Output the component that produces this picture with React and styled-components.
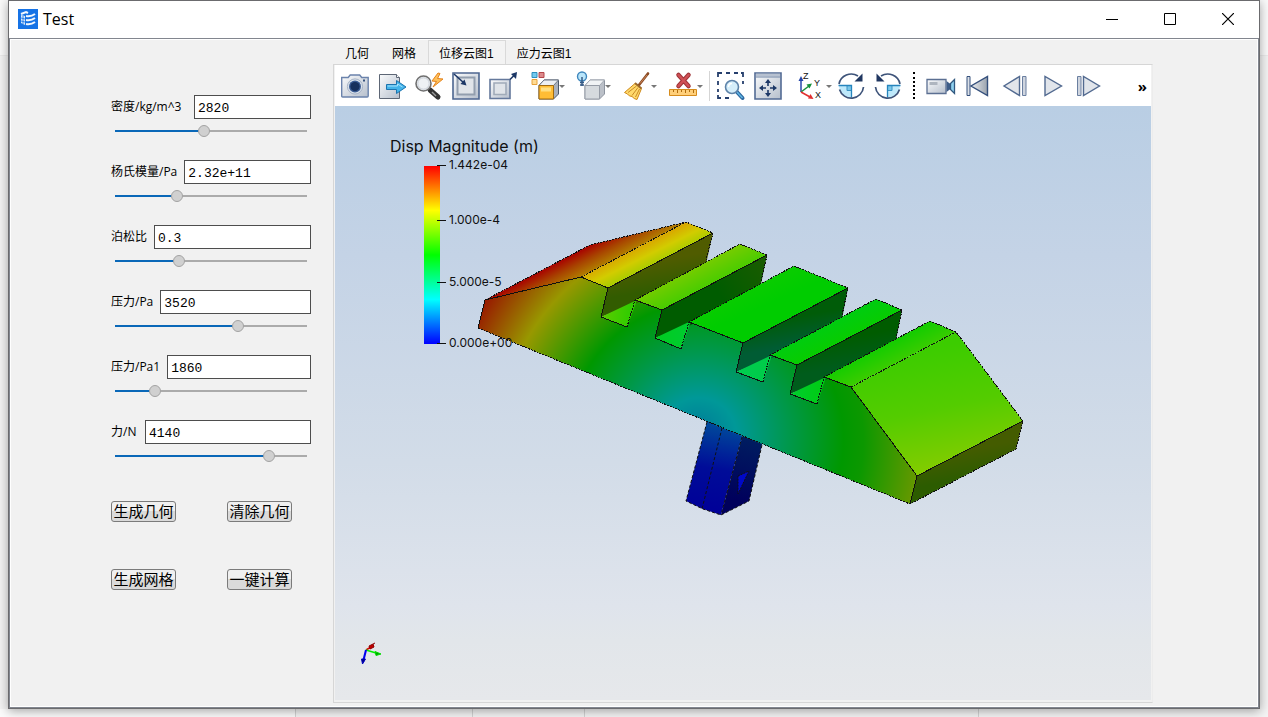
import React, { useState } from "react";
import styled, { createGlobalStyle } from "styled-components";

const UI_FONT = '"Open Sans", "Noto Sans CJK SC", sans-serif';
const SONG_FONT = '"Liberation Sans", "Noto Sans CJK SC", sans-serif';

const GlobalStyle = createGlobalStyle`
  * { box-sizing: border-box; }
  body { margin: 0; background: #f0f0f0; }
  button, input { margin: 0; }
`;

const Desktop = styled.div`
  min-height: 100vh;
  display: grid;
  grid-template-rows: 1fr 8px;
  background: linear-gradient(#fafafa 0 55px, #ebebeb 55px 56px, #f3f3f3 56px);
`;

const Window = styled.main`
  margin: 0 8px;
  display: flex;
  flex-direction: column;
  min-width: 0;
  background: #f1f1f1;
  border: 1px solid #6b6b6e;
  box-shadow: 0 2px 10px rgba(0, 0, 0, 0.35);
  z-index: 1;
`;

const Taskbar = styled.div`
  display: grid;
  grid-template-columns: 296px 177px 112px 394px 1fr;
  background: #f4f4f4;
`;

const TaskCell = styled.span`
  border-right: 1px solid #d4d4d4;
  background: ${(p) => (p.$light ? "#fbfbfb" : "transparent")};
`;

const TitleBar = styled.header`
  height: 37px;
  display: flex;
  align-items: center;
  background: #fff;
  padding: 0 2px 2px 9px;
`;

const Title = styled.h1`
  flex: 1;
  margin: 0 0 0 5px;
  font: 400 16px/20px ${UI_FONT};
  color: #000;
`;

const WindowButton = styled.button`
  width: 58px;
  height: 34px;
  padding: 0;
  border: 0;
  background: none;
  display: grid;
  place-items: center;
`;

const Client = styled.div`
  flex: 1;
  display: grid;
  grid-template-columns: 322px minmax(0, 1fr) 104px;
  border: 1px solid #82868f;
  box-shadow: inset 0 0 0 1px #fff;
  padding: 1px;
`;

const SidePanel = styled.form`
  padding: 55px 22px 0 100px;
`;

const Field = styled.div`
  height: 65px;
`;

const FieldRow = styled.div`
  display: flex;
  align-items: center;
  gap: 7px;
`;

const FieldLabel = styled.label`
  min-width: ${(p) => p.$minWidth || 0}px;
  font: 12px/24px ${UI_FONT};
  color: #000;
  white-space: nowrap;
`;

const TextBox = styled.input`
  flex: 1;
  min-width: 0;
  height: 24px;
  padding: 2px 3px 0;
  border: 1px solid #4d4d4d;
  border-radius: 0;
  background: #fff;
  color: #000;
  font: 13px/20px "Liberation Mono", monospace;
`;

const Slider = styled.input`
  appearance: none;
  display: block;
  width: 192px;
  height: 12px;
  margin: 6px 4px 0;
  background: linear-gradient(#0a68b8, #0a68b8) 0 5px / var(--fill) 2px no-repeat,
    linear-gradient(#ababab, #ababab) 0 5px / 100% 2px no-repeat;
  &::-webkit-slider-thumb {
    appearance: none;
    width: 12px;
    height: 12px;
    border: 1px solid #a3a3a3;
    border-radius: 50%;
    background: #d0d0d0;
  }
`;

const Actions = styled.div`
  display: grid;
  grid-template-columns: 65px 65px;
  column-gap: 51px;
  row-gap: 47px;
  margin-top: 16px;
`;

const ActionButton = styled.button`
  height: 21px;
  padding: 0;
  border: 1px solid #7b7b7b;
  border-radius: 3px;
  background: linear-gradient(#f0f0f0 0 50%, #dadada 50% 100%);
  color: #000;
  font: 15px/18px ${SONG_FONT};
  white-space: nowrap;
`;

const Viewer = styled.section`
  display: flex;
  flex-direction: column;
  padding-bottom: 3px;
`;

const Tabs = styled.nav`
  display: flex;
  height: 24px;
  padding-left: 1px;
`;

const Tab = styled.button`
  height: 24px;
  padding: 2px 11px 0 10px;
  border: 1px solid transparent;
  border-bottom: 0;
  background: none;
  color: #000;
  font: 12px/20px ${SONG_FONT};
  ${(p) => p.$active && "border-color: #d9d9d9; background: #f3f3f3;"}
`;

const Frame = styled.div`
  flex: 1;
  display: flex;
  flex-direction: column;
  border: 1px solid #d6d6d6;
  border-right-color: #ececec;
  padding: 0 1px 2px;
`;

const Toolbar = styled.div`
  height: 41px;
  display: flex;
  align-items: center;
  background: #fff;
  padding: 0 4px 0 6px;
  overflow: hidden;
`;

const ToolGroup = styled.div`
  display: flex;
  flex: none;
  gap: ${(p) => p.$gap || 9}px;
  margin-left: ${(p) => p.$before || 0}px;
`;

const ToolButton = styled.button`
  display: flex;
  align-items: center;
  flex: none;
  padding: 0;
  border: 0;
  background: none;
  svg { display: block; overflow: visible; }
`;

const Divider = styled.span`
  flex: none;
  width: 1px;
  height: 30px;
  margin-left: 6px;
  background: #d5d5d5;
`;

const DottedDivider = styled.span`
  flex: none;
  height: 27px;
  margin-left: 11px;
  border-left: 2px dotted #000;
`;

const MoreButton = styled.button`
  margin-left: auto;
  padding: 0;
  border: 0;
  background: none;
  font: 700 15px/20px ${UI_FONT};
  color: #000;
`;

const Viewport = styled.div`
  flex: 1;
  background: linear-gradient(#b9cee4, #c4d3e6 25%, #d2dce8 60%, #dfe4ec 84%, #e2e6ea 90%, #e6e8eb);
  svg { display: block; width: 100%; height: auto; }
`;

const NAVY = "#35507c";

const Arrow = () => (
  <svg width="6" height="28" viewBox="0 0 6 28"><path d="M0 13h6l-3 3z" fill="#777" /></svg>
);

function Metal({ id }) {
  return (
    <defs>
      <linearGradient id={id} x1="0" y1="0" x2="1" y2="1">
        <stop offset="0" stopColor="#fafbfc" /><stop offset="1" stopColor="#b6bfcc" />
      </linearGradient>
    </defs>
  );
}

const icons = {
  camera: (
    <>
      <Metal id="m-cam" />
      <path d="M.7 5.500h6.500l2-2.500h9.500l2 2.500h6.500v18.500q0 1-1 1h-24.500q-1 0-1-1z" fill="url(#m-cam)" stroke="#6b83ac" strokeWidth="1.4" />
      <circle cx="14" cy="14.500" r="7.600" fill="#dbe3ec" stroke="#a5b2c6" />
      <circle cx="14" cy="14.500" r="6" fill="#3a5b93" />
      <circle cx="14" cy="14.500" r="4.600" fill="#17305c" />
      <path d="M22 8.500h2" stroke={NAVY} strokeWidth="2" />
    </>
  ),
  export: (
    <>
      <Metal id="m-exp" />
      <path d="M1.500 2.500h17l3 3v21h-20z" fill="url(#m-exp)" stroke="#5d6675" />
      <path d="M18.500 2.500v3h3" fill="#fff" stroke="#5d6675" />
      <path d="M8.500 12.500h10v-4l9.500 6.500-9.500 6.500v-4h-10z" fill="#43b4ea" stroke="#1b73ae" />
      <path d="M9.500 14h10v-2l5 3" fill="none" stroke="#a8e2fb" />
    </>
  ),
  probe: (
    <>
      <path d="M15 18l8 7" stroke="#333" strokeWidth="5" strokeLinecap="round" />
      <path d="M17 20l4 4" stroke="#999" strokeWidth="1.500" />
      <circle cx="8.500" cy="11.500" r="7.500" fill="#eef1f4" stroke="#707070" strokeWidth="1.600" />
      <circle cx="8.500" cy="11.500" r="5.700" fill="none" stroke="#c8ced6" />
      <path d="M23 1l-6 8 4.500.500-3.500 5.500 10-8-5.500-.500 2.500-5z" fill="#ffc05a" stroke="#e4831c" />
    </>
  ),
  zoomIn: (
    <>
      <Metal id="m-in" />
      <path d="M1 1h26v26H1z" fill="url(#m-in)" stroke="#4d6690" strokeWidth="1.600" />
      <path d="M5.500 5.500h17v17h-17z" fill="#e0e4e9" stroke="#929eae" strokeWidth="2" />
      <path d="M2 2l10 9" stroke="#1c3766" strokeWidth="1.600" />
      <path d="M14.500 13.500l-2-6-4 4.500z" fill="#1c3766" />
    </>
  ),
  zoomOut: (
    <>
      <Metal id="m-out" />
      <path d="M1 7.500h20v19H1z" fill="url(#m-out)" stroke="#65799c" strokeWidth="1.600" />
      <path d="M5 11h12v11.500H5z" fill="#e0e4e9" stroke="#a0abb9" strokeWidth="1.600" />
      <path d="M21 7.500l6-6" stroke="#1c3766" strokeWidth="1.600" />
      <path d="M28 0l-1 7-5-5z" fill="#1c3766" />
    </>
  ),
  colorCube: (
    <>
      <path d="M1 .500h5v5H1z" fill="#72c9ef" stroke="#2d8fbe" />
      <path d="M8 .500h5v5H8z" fill="#dd8a8c" stroke="#b4474b" />
      <path d="M1 7.500h5v5H1z" fill="#ffdb94" stroke="#e6a23c" />
      <path d="M8 13.500L13 8h14.500v14l-5 5H8z" fill="#a9b1bd" stroke="#4c586a" />
      <path d="M8 13.500L13 8h14.500l-5 5.500z" fill="#eceff3" stroke="#6c7685" />
      <path d="M8 13.500h14.500V27H8z" fill="#ffbd35" stroke="#a26b0e" />
      <path d="M10 15.500h10v4H10z" fill="#ffdf82" />
    </>
  ),
  lightCube: (
    <>
      <path d="M8 13.500L13 8h14.500v14l-5 5H8z" fill="#bbc0c8" stroke="#8d949f" />
      <path d="M8 13.500L13 8h14.500l-5 5.500z" fill="#f1f3f5" stroke="#a5abb4" />
      <path d="M8 13.500h14.500V27H8z" fill="#d6dade" stroke="#969ca6" />
      <circle cx="5" cy="4.500" r="4.500" fill="#b9e5fa" stroke="#3f87bd" strokeWidth="1.400" />
      <path d="M5 5v9M3 10.500h4M3 13h4" stroke="#365a85" strokeWidth="1.500" />
    </>
  ),
  broom: (
    <>
      <path d="M25 1.500L16 13" stroke="#8b4b25" strokeWidth="2.600" strokeLinecap="round" />
      <path d="M24 3l-7 8.500" stroke="#c98457" />
      <path d="M12 11.500l6.500 5-4.500 11q-3-.500-5-3-3 0-4.500-2.500l-3-1.500z" fill="#ffd96b" stroke="#cf8a1a" />
      <path d="M13.500 14L5 20.500M15 15.500l-6 8M16.500 17l-4 8" stroke="#c98a26" />
      <path d="M12 11l6.500 5.500" stroke="#9c6a2b" strokeWidth="2" />
    </>
  ),
  ruler: (
    <>
      <path d="M9.500 3l10 11M19.500 3l-10 11" stroke="#9f3438" strokeWidth="4.500" strokeLinecap="round" />
      <path d="M9.500 3l10 11M19.500 3l-10 11" stroke="#cf5056" strokeWidth="2.500" strokeLinecap="round" />
      <path d="M.500 17.500h27v6H.500z" fill="#ffcf79" stroke="#d68c1c" />
      <path d="M4.500 18v2M8.500 18v3M12.500 18v2M16.500 18v3M20.500 18v2M24.500 18v3" stroke="#b06d0e" />
    </>
  ),
  selectZoom: (
    <>
      <path d="M1 5V1h4M9 1h4M17 1h4M24 1h2v4M26 9v3M1 9v4M1 17v3M1 23v3h3M8 26h4" fill="none" stroke="#263f6d" strokeWidth="1.800" />
      <path d="M20 20l5.500 6" stroke="#2d68a0" strokeWidth="4" strokeLinecap="round" />
      <path d="M20 20l5.500 6" stroke="#62b7e4" strokeWidth="1.500" />
      <circle cx="15" cy="15" r="6.500" fill="#d5eefa" stroke="#5d83a9" strokeWidth="1.600" />
      <path d="M11.500 15q0-3.500 3.500-3.500" fill="none" stroke="#fff" strokeWidth="1.500" />
    </>
  ),
  fit: (
    <>
      <Metal id="m-fit" />
      <path d="M1 1h26v26H1z" fill="url(#m-fit)" stroke="#536b94" strokeWidth="1.600" />
      <path d="M2 3h24" stroke="#b7c1d0" strokeWidth="2.500" /><path d="M2 5h24" stroke="#7185a5" />
      <path d="M14 10v4M14 18v4M8 16h4M16 16h4" stroke="#1c3766" strokeWidth="1.600" />
      <path d="M14 7l3 4h-6zM14 25l3-4h-6zM5 16l4-3v6zM23 16l-4-3v6z" fill="#1c3766" />
    </>
  ),
  axes: (
    <>
      <path d="M3 20V8" stroke="#2747ab" strokeWidth="1.500" /><path d="M3 4l2.500 5h-5z" fill="#2747ab" />
      <path d="M3 20l8-6" stroke="#16913a" strokeWidth="1.500" /><path d="M14 11.500l-2.500 5-3-4z" fill="#16913a" />
      <path d="M3 20l9 5" stroke="#e22f2f" strokeWidth="1.500" /><path d="M15.500 27l-5.500-.500 2.500-4.500z" fill="#e22f2f" />
      <text x="5" y="7" fontFamily="Liberation Sans, sans-serif" fontSize="9" fill="#111">Z</text>
      <text x="16" y="14" fontFamily="Liberation Sans, sans-serif" fontSize="9" fill="#111">Y</text>
      <text x="17" y="26" fontFamily="Liberation Sans, sans-serif" fontSize="9" fill="#111">X</text>
    </>
  ),
  rotateCw: (
    <>
      <path d="M2 13.500h12.500v12a12.500 12.500 0 0 1-12.500-12z" fill="#bee9fb" />
      <path d="M10 13.500v5h4.500v-5z" fill="#7ac7ea" stroke="#3c94c4" />
      <path d="M1.500 13.500h13v12" fill="none" stroke="#2584bd" strokeWidth="1.300" />
      <path d="M2 12A12.500 12.200 0 0 1 21 4M2.500 17.500A12.300 12.300 0 0 0 26.500 15" fill="none" stroke="#3d5379" strokeWidth="1.700" />
      <path d="M25.500 1.500v8H17.500z" fill="#203761" />
    </>
  ),
  first: (
    <>
      <defs>
        <linearGradient id="m-first"><stop offset="0" stopColor="#eceef0" /><stop offset="1" stopColor="#9aa3ae" /></linearGradient>
      </defs>
      <path d="M4 4.500h3v19H4z" fill="#dbe0e7" stroke={NAVY} />
      <path d="M24.500 4.500v19L8 14z" fill="url(#m-first)" stroke={NAVY} strokeWidth="1.400" />
    </>
  ),
  prev: (
    <>
      <path d="M19.500 4.500v19L4 14z" fill="#e2e5ea" stroke="#526a90" strokeWidth="1.400" />
      <path d="M22.500 4.500h3.500v19h-3.500z" fill="#cfd5df" stroke="#6a7fa0" />
    </>
  ),
  play: <path d="M8 4.500v19L24.500 14z" fill="#e1e5eb" stroke="#526a90" strokeWidth="1.400" />,
  next: (
    <>
      <path d="M9.500 4.500v19L25.500 14z" fill="#e1e5eb" stroke="#526a90" strokeWidth="1.400" />
      <path d="M3.500 4.500h3.500v19H3.500z" fill="#cfd5df" stroke="#6a7fa0" />
    </>
  ),
  video: (
    <>
      <Metal id="m-vid" />
      <path d="M1 7.500h19v14H1z" fill="url(#m-vid)" stroke="#5b6f92" strokeWidth="1.300" />
      <path d="M3.500 10h8v3h-8z" fill="#aeb5bf" />
      <path d="M20.500 9l4 3v5l-4 3z" fill="#3e5d88" />
      <path d="M28.500 7.500l-4 4v6l4 4z" fill="#8fd1ef" stroke="#31587f" strokeWidth="1.300" />
    </>
  ),
};
icons.rotateCcw = <g transform="matrix(-1 0 0 1 28 0)">{icons.rotateCw}</g>;

function Tool({ icon, label, menu }) {
  return (
    <ToolButton type="button" aria-label={label}>
      <svg width="28" height="28" viewBox="0 0 28 28">{icons[icon]}</svg>
      {menu && <Arrow />}
    </ToolButton>
  );
}

const fields = [
  { id: "density", label: "密度/kg/m^3", value: "2820", level: 46, labelWidth: 76 },
  { id: "young", label: "杨氏模量/Pa", value: "2.32e+11", level: 31 },
  { id: "poisson", label: "泊松比", value: "0.3", level: 32 },
  { id: "pressure", label: "压力/Pa", value: "3520", level: 65 },
  { id: "pressure1", label: "压力/Pa1", value: "1860", level: 19 },
  { id: "force", label: "力/N", value: "4140", level: 82, labelWidth: 27 },
];

function ParameterField({ id, label, value, level, labelWidth }) {
  const [pos, setPos] = useState(level);
  return (
    <Field>
      <FieldRow>
        <FieldLabel htmlFor={id} $minWidth={labelWidth}>{label}</FieldLabel>
        <TextBox id={id} defaultValue={value} />
      </FieldRow>
      <Slider
        type="range"
        aria-label={label}
        value={pos}
        onChange={(e) => setPos(Number(e.target.value))}
        style={{ "--fill": `${pos}%` }}
      />
    </Field>
  );
}

function Gradient({ id, from, to, stops }) {
  return (
    <linearGradient id={id} gradientUnits="userSpaceOnUse" x1={from[0]} y1={from[1]} x2={to[0]} y2={to[1]}>
      {stops.map((c, i) => <stop key={i} offset={i / (stops.length - 1)} stopColor={c} />)}
    </linearGradient>
  );
}

const faces = [
  { id: "slope-l", pts: "485,300 590,245 686,222 581,277", from: [540, 271], to: [551, 292], stops: ["#a80000", "#a84400", "#b07c00"] },
  { id: "top-1", pts: "581,277 686,222 713,233 608,288", from: [633, 250], to: [643, 270], stops: ["#d8a800", "#d2cc00", "#a8cc00"] },
  { id: "wall-1", pts: "608,288 713,233 706,264 637,303 601,317", from: [650, 262], to: [655, 290], stops: ["#505c00", "#325c00"] },
  { id: "floor-1", pts: "601,317 637,300 627,327", from: [601, 317], to: [630, 320], stops: ["#5ccc00", "#30cc00"] },
  { id: "top-2", pts: "635,300 740,244 767,255 662,310", from: [687, 272], to: [697, 292], stops: ["#74cc00", "#48cc00"] },
  { id: "wall-2", pts: "662,310 767,255 761,284 691,325 655,338", from: [767, 255], to: [667, 325], stops: ["#1c5c00", "#005c00", "#005c00"] },
  { id: "floor-2", pts: "655,338 691,321 681,349", from: [655, 338], to: [689, 340], stops: ["#00cc20", "#00cc30"] },
  { id: "top-3", pts: "689,322 794,266 848,288 743,343", from: [742, 294], to: [750, 312], stops: ["#08cc00", "#00cc00"] },
  { id: "wall-3", pts: "743,343 848,288 842,319 772,358 736,372", from: [790, 318], to: [795, 345], stops: ["#005c08", "#005c34"] },
  { id: "floor-3", pts: "736,372 772,355 763,382", from: [736, 372], to: [770, 372], stops: ["#00cc50", "#00cc48"] },
  { id: "top-4", pts: "770,355 876,299 902,310 797,365", from: [822, 327], to: [832, 347], stops: ["#00cc10", "#08cc00"] },
  { id: "wall-4", pts: "797,365 902,310 896,340 826,380 790,394", from: [850, 337], to: [855, 365], stops: ["#005c00", "#005c1c"] },
  { id: "floor-4", pts: "790,394 826,377 817,404", from: [790, 394], to: [817, 394], stops: ["#00cc30", "#00cc18"] },
  { id: "top-5", pts: "824,377 930,321 956,332 851,387", from: [877, 349], to: [887, 369], stops: ["#14cc00", "#3ccc00"] },
  { id: "slope-r", pts: "851,387 956,332 1023,421 917,476", from: [920, 350], to: [945, 470], stops: ["#3ccc00", "#54cc00", "#84cc00"] },
  { id: "end", pts: "917,476 1023,421 1016,449 910,504", from: [965, 450], to: [970, 478], stops: ["#445c00", "#2c5c00"] },
];

const solidEdges =
  "M485 300L581 277L608 288L713 233M608 288L601 317L627 327M635 300L662 310L767 255M662 310L655 338L681 349" +
  "M689 322L743 343L848 288M743 343L736 372L763 382M770 355L797 365L902 310M797 365L790 394L817 404" +
  "M824 377L851 387L917 476L1023 421M917 476L910 504M485 300L478 328";
const dottedEdges =
  "M485 300L590 245L686 222L713 233L706 260M581 277L686 222M627 327L635 300L740 244L767 255L761 282" +
  "M681 349L689 322L794 266L848 288L842 315M763 382L770 355L876 299L902 310L896 338" +
  "M817 404L824 377L930 321L956 332L1023 421L1016 449L910 504L478 328M851 387L956 332";

const ticks = [
  { y: 165, label: "1.442e-04" },
  { y: 220, label: "1.000e-4" },
  { y: 282, label: "5.000e-5" },
  { y: 343, label: "0.000e+00" },
];

const legendFont = "Inter, sans-serif";

function Scene() {
  return (
    <svg viewBox="335 106 816 594" role="img" aria-label="Disp Magnitude (m)">
      <defs>
        {faces.map((f) => <Gradient key={f.id} {...f} />)}
        <Gradient id="legend" from={[0, 344]} to={[0, 166]} stops={["#00f", "#0ff", "#0f0", "#ff0", "#f00"]} />
        <Gradient id="stem-l" from={[715, 425]} to={[700, 510]} stops={["#00489a", "#000c98", "#000098"]} />
        <Gradient id="stem-r" from={[750, 440]} to={[735, 500]} stops={["#001c60", "#00005c"]} />
        <radialGradient id="front-l" gradientUnits="userSpaceOnUse" cx="715" cy="445" fx="696" fy="434" r="270">
          <stop offset="0" stopColor="#007898" /><stop offset="0.140" stopColor="#009898" />
          <stop offset="0.320" stopColor="#00984c" />
          <stop offset="0.510" stopColor="#009800" /><stop offset="0.780" stopColor="#989800" />
          <stop offset="1" stopColor="#981c00" />
        </radialGradient>
        <radialGradient id="front-r" gradientUnits="userSpaceOnUse" cx="715" cy="445" fx="696" fy="434" r="270">
          <stop offset="0" stopColor="#007898" /><stop offset="0.140" stopColor="#009898" />
          <stop offset="0.320" stopColor="#00984c" />
          <stop offset="0.510" stopColor="#009800" /><stop offset="0.580" stopColor="#0c9800" />
          <stop offset="0.780" stopColor="#689800" />
        </radialGradient>
      </defs>

      <path d="M709 414L686 501L703 509L721 515L744 430z" fill="url(#stem-l)" />
      <path d="M744 430L721 515L749 501L764 436z" fill="url(#stem-r)" />
      <path d="M738 476L749 471L738 494z" fill="#0008c8" stroke="#111" strokeDasharray="2 1" />
      <path d="M707 422L686 501L703 509L721 515L749 501L762 445M722 428L702 509M742 437L721 515" fill="none" stroke="#111" strokeDasharray="3 2" />

      <path d="M485 300L581 277L608 288L601 317L627 327L635 300L662 310L655 338L681 349L689 322L716 332V425L478 328z" fill="url(#front-l)" />
      <path d="M715 332L743 343L736 372L763 382L770 355L797 365L790 394L817 404L824 377L851 387L917 476L910 504L715 425z" fill="url(#front-r)" />
      {faces.map((f) => <polygon key={f.id} points={f.pts} fill={`url(#${f.id})`} />)}
      <path d={solidEdges} fill="none" stroke="#101010" shapeRendering="crispEdges" />
      <path d={dottedEdges} fill="none" stroke="#101010" strokeDasharray="2 1" shapeRendering="crispEdges" />

      <text x="390" y="152" fontFamily={legendFont} fontSize="16" fill="#111">Disp Magnitude (m)</text>
      <rect x="424" y="166" width="16" height="178" fill="url(#legend)" />
      {ticks.map((t) => (
        <g key={t.label}>
          <path d={`M437 ${t.y}.500h9`} stroke="#111" />
          <text x="449" y={t.y + 4} fontFamily={legendFont} fontSize="12" fill="#111">{t.label}</text>
        </g>
      ))}

      <g fill="none" strokeWidth="1.500">
        <path d="M366 650L371 647" stroke="#e00000" /><path d="M369 646l4-2 1 3-4 2zM373 644l2-1" fill="#c00000" stroke="#900000" strokeWidth="1" />
        <path d="M366 650L376 653" stroke="#00f000" /><path d="M375 651.500l6 2.500-5 1.500z" fill="#00a000" stroke="#00e000" strokeWidth="1" />
        <path d="M366 650L363 662" stroke="#0000f0" strokeWidth="2" /><path d="M361.500 659h4l-3 5z" fill="#000080" stroke="#0000c0" strokeWidth="1" />
      </g>
    </svg>
  );
}

export default function App() {
  return (
    <Desktop>
      <GlobalStyle />
      <Window>
        <TitleBar>
          <svg width="20" height="20" viewBox="0 0 20 20" aria-hidden="true">
            <path d="M0 0h20v20H0z" fill="#1673e6" />
            <path d="M3 5l5-2 2 1M8 7q5 1 9-2M8 11q5 1 9-2M8 15q5 1 9-2" fill="none" stroke="#f2f7fd" strokeWidth="2" />
            <path d="M3 6l4 1v9l-4-2z" fill="#d9e9fb" />
            <path d="M3 9l4 1M3 12l4 1M5 7v8" stroke="#1673e6" strokeWidth="0.800" />
          </svg>
          <Title>Test</Title>
          <WindowButton type="button" aria-label="Minimize">
            <svg width="12" height="12" viewBox="0 0 12 12"><path d="M0 6.500h12" stroke="#000" /></svg>
          </WindowButton>
          <WindowButton type="button" aria-label="Maximize">
            <svg width="12" height="12" viewBox="0 0 12 12"><path d="M.500.500h11v11H.500z" fill="none" stroke="#000" /></svg>
          </WindowButton>
          <WindowButton type="button" aria-label="Close">
            <svg width="12" height="12" viewBox="0 0 12 12"><path d="M0 0l12 12M12 0L0 12" stroke="#000" strokeWidth="1.200" /></svg>
          </WindowButton>
        </TitleBar>
        <Client>
          <SidePanel>
            {fields.map((f) => <ParameterField key={f.id} {...f} />)}
            <Actions>
              <ActionButton type="button">生成几何</ActionButton>
              <ActionButton type="button">清除几何</ActionButton>
              <ActionButton type="button">生成网格</ActionButton>
              <ActionButton type="button">一键计算</ActionButton>
            </Actions>
          </SidePanel>
          <Viewer>
            <Tabs>
              <Tab type="button">几何</Tab>
              <Tab type="button">网格</Tab>
              <Tab type="button" $active>位移云图1</Tab>
              <Tab type="button">应力云图1</Tab>
            </Tabs>
            <Frame>
              <Toolbar>
                <ToolGroup>
                  <Tool icon="camera" label="Snapshot" />
                  <Tool icon="export" label="Export" />
                  <Tool icon="probe" label="Probe" />
                  <Tool icon="zoomIn" label="Shrink" />
                  <Tool icon="zoomOut" label="Enlarge" />
                </ToolGroup>
                <ToolGroup $gap={12} $before={14}>
                  <Tool icon="colorCube" label="Color" menu />
                  <Tool icon="lightCube" label="Light" menu />
                  <Tool icon="broom" label="Clear" menu />
                  <Tool icon="ruler" label="Remove measures" menu />
                </ToolGroup>
                <Divider />
                <ToolGroup $before={7}>
                  <Tool icon="selectZoom" label="Zoom to box" />
                  <Tool icon="fit" label="Fit" />
                </ToolGroup>
                <ToolGroup $before={16}>
                  <Tool icon="axes" label="Orientation" menu />
                </ToolGroup>
                <ToolGroup $before={5}>
                  <Tool icon="rotateCw" label="Rotate clockwise" />
                  <Tool icon="rotateCcw" label="Rotate counterclockwise" />
                </ToolGroup>
                <DottedDivider />
                <ToolGroup $before={11}>
                  <Tool icon="video" label="Record" />
                  <Tool icon="first" label="First frame" />
                  <Tool icon="prev" label="Previous frame" />
                  <Tool icon="play" label="Play" />
                  <Tool icon="next" label="Next frame" />
                </ToolGroup>
                <MoreButton type="button" aria-label="More">»</MoreButton>
              </Toolbar>
              <Viewport><Scene /></Viewport>
            </Frame>
          </Viewer>
        </Client>
      </Window>
      <Taskbar aria-hidden="true">
        <TaskCell $light /><TaskCell /><TaskCell /><TaskCell /><span />
      </Taskbar>
    </Desktop>
  );
}
